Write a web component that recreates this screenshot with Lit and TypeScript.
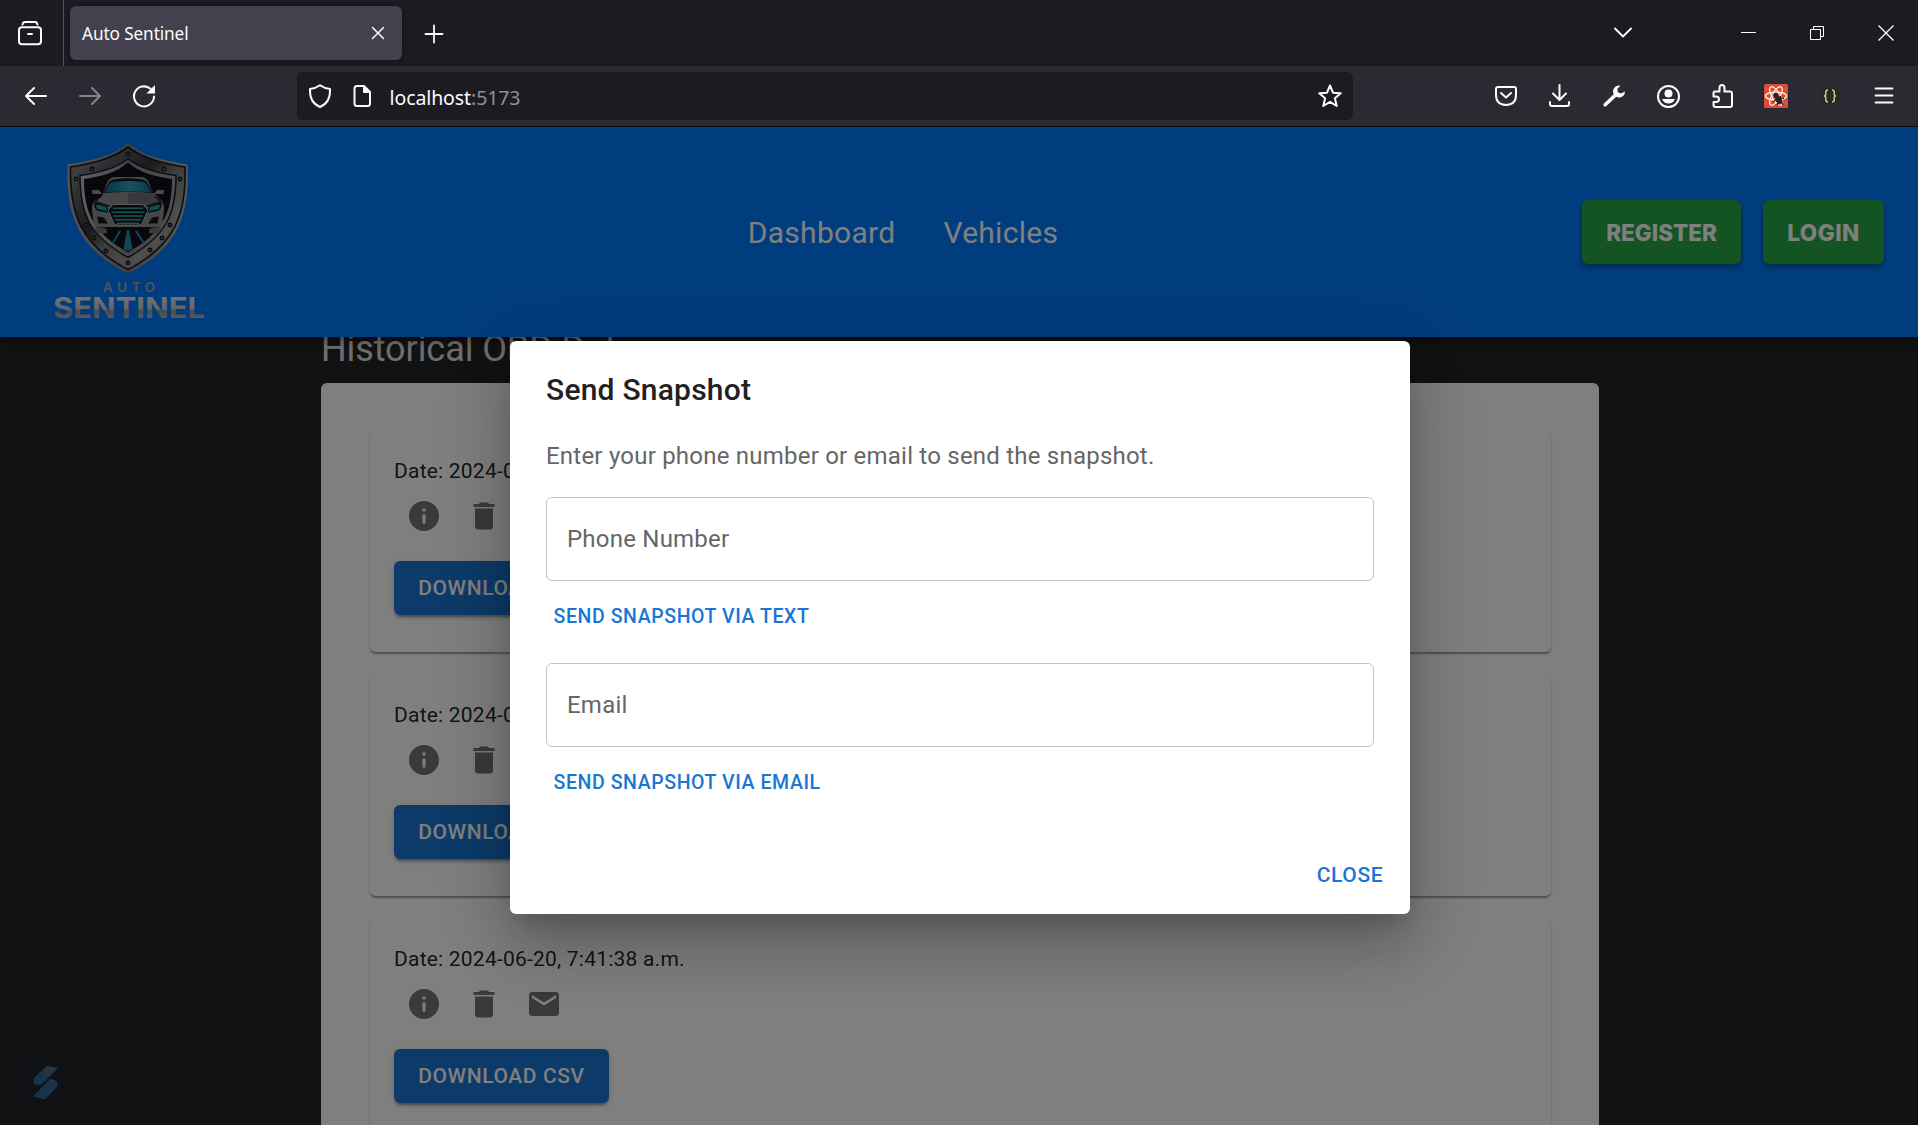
import { LitElement, html, css, svg } from "lit";
import { customElement, property } from "lit/decorators.js";

const line = (d: string, w = 2) =>
  svg`<path d=${d} fill="none" stroke="currentColor" stroke-width=${w} stroke-linecap="round" stroke-linejoin="round"></path>`;

@customElement("browser-chrome")
export class BrowserChrome extends LitElement {
  static styles = css`
    :host { display: block; font-family: "Noto Sans", "Open Sans", sans-serif; color: #fbfbfe; background: #1c1b22; }
    svg { display: block; flex: none; overflow: visible; }
    .tabs { display: flex; height: 66px; align-items: center; }
    .view { width: 64px; height: 66px; display: flex; align-items: center; padding-left: 18px; box-sizing: border-box; border-right: 1px solid #53525a; }
    .tab { display: flex; align-items: center; justify-content: space-between; box-sizing: border-box; width: 332px; height: 54px; margin-left: 6px; padding: 0 18px 0 12px; border-radius: 6px; background: #42414d; box-shadow: 0 0 4px rgba(0,0,0,.5); font-size: 17.2px; }
    .title { letter-spacing: -.1px; padding-top: 1px; }
    .plus { margin: 1px 0 0 23px; }
    .win { margin-left: auto; display: flex; align-items: center; }
    .bar { display: flex; height: 60px; align-items: center; background: #2b2a33; border-bottom: 1px solid #0c0c0d; }
    .navs { width: 297px; box-sizing: border-box; display: flex; gap: 30px; padding-left: 24px; }
    .dim { color: #85848b; }
    .url { width: 1056px; height: 48px; box-sizing: border-box; border-radius: 6px; background: #1c1b22; display: flex; align-items: center; padding: 0 11px; }
    .addr { font-size: 19.5px; margin-left: 18px; padding-top: 2px; flex: 1; letter-spacing: -.1px; }
    .port { color: #8f8f95; }
    .page { margin-left: 20.5px; }
    .tools { display: flex; gap: 30px; margin-left: auto; padding-right: 22px; align-items: center; }
  `;
  render() {
    return html`
      <div class="tabs">
        <div class="view"><svg width="24" height="24" viewBox="0 0 24 24">
          ${line("M4.5 3.6 Q5 1 7 1 H17 Q19 1 19.5 3.6")}
          <rect x="1" y="6.2" width="22" height="17" rx="3" fill="none" stroke="currentColor" stroke-width="2"></rect>
          ${line("M10 13H14")}</svg></div>
        <div class="tab"><span class="title">Auto Sentinel</span>
          <svg width="12" height="12" viewBox="0 0 12 12">${line("M.5 .5L11.5 11.5M11.5 .5L.5 11.5", 1.5)}</svg></div>
        <svg class="plus" width="18" height="18" viewBox="0 0 18 18">${line("M9 .5V17.5M.5 9H17.5", 1.8)}</svg>
        <div class="win">
          <svg width="304" height="24" viewBox="1614 21 304 24">
            ${line("M1615 28.5L1623 36.5L1631 28.5", 1.8)}
            <path d="M1741 32.5H1756" stroke="#fff" stroke-width="1"></path>
            <path d="M1810.5 29.5h10v10h-10zM1813.5 29V26.5H1823.5V36.5H1821" fill="none" stroke="#fff" stroke-width="1"></path>
            <path d="M1878.5 25.5L1893.5 40.5M1893.5 25.5L1878.5 40.5" stroke="#fff" stroke-width="1.3"></path>
          </svg>
        </div>
      </div>
      <div class="bar">
        <div class="navs">
          <svg width="24" height="24" viewBox="0 0 24 24">${line("M22 12H2.5M10 4L2 12L10 20")}</svg>
          <svg class="dim" width="24" height="24" viewBox="0 0 24 24">${line("M2 12H21.5M14 4L22 12L14 20")}</svg>
          <svg width="24" height="24" viewBox="0 0 24 24">${line("M18.5 4.8A10 10 0 1 0 22 12.5")}<path d="M23 1V9.5H14.5Z" fill="currentColor"></path></svg>
        </div>
        <div class="url">
          <svg width="24" height="24" viewBox="0 0 24 24">${line("M12 1.2C9.5 3 5.5 4.5 2 5C1.5 14 5 20 12 23C19 20 22.5 14 22 5C18.5 4.5 14.5 3 12 1.2Z")}</svg>
          <svg class="page" width="19" height="24" viewBox="0 0 19 24">${line("M4 2H11L17 8V19.5Q17 22 14.5 22H4Q1.5 22 1.5 19.5V4.5Q1.5 2 4 2Z")}<path d="M10.5 1.5V8.5H18Z" fill="currentColor" stroke="currentColor"></path></svg>
          <span class="addr">localhost<span class="port">:5173</span></span>
          <svg width="24" height="24" viewBox="0 0 24 24">${line("M12 1.5L15 8.7L22.7 9.3L16.9 14.3L18.7 22L12 17.9L5.3 22L7.1 14.3L1.3 9.3L9 8.7Z")}</svg>
        </div>
        <div class="tools">
          <svg width="24" height="24" viewBox="0 0 24 24">${line("M4 3H20Q22 3 22 5V11Q22 20.5 12 21Q2 20.5 2 11V5Q2 3 4 3Z")}${line("M7 9L12 13.5L17 9")}</svg>
          <svg width="24" height="24" viewBox="0 0 24 24">${line("M11.5 1V15.5M5 9.5L11.5 16L18 9.5M2 18V20Q2 22 4 22H19Q21 22 21 20V18")}</svg>
          <svg width="24" height="24" viewBox="0 0 24 24"><path d="M3.2 20.8L13.5 11" stroke="currentColor" stroke-width="3.6" stroke-linecap="round"></path><path d="M18.5 1.8A6 6 0 1 0 23 7.5L18.8 9.6L15.6 8L15.5 4.5Z" fill="currentColor"></path></svg>
          <svg width="24" height="24" viewBox="0 0 24 24"><circle cx="12.5" cy="12.5" r="10.5" fill="none" stroke="currentColor" stroke-width="2"></circle><circle cx="12.5" cy="9.5" r="4" fill="currentColor"></circle><path d="M6 15H19Q17 19.5 12.5 19.5Q8 19.5 6 15Z" fill="currentColor"></path></svg>
          <svg width="24" height="24" viewBox="0 0 24 24">${line("M5 7.5H9.5V4Q9.5 1 12 1Q14.5 1 14.5 4V7.5H20Q22 7.5 22 9.5V21Q22 23 20 23H5.5Q3.5 23 3.5 21V18H6Q9 18 9 15.2Q9 12.5 6 12.5H3.5V9.5Q3.5 7.5 5 7.5Z")}</svg>
          <svg width="24" height="24" viewBox="0 0 24 24"><rect width="24" height="24" rx="1.5" fill="#de4b37"></rect>
            <g fill="none" stroke="#fff" stroke-width="1.2"><ellipse cx="12" cy="12" rx="10.5" ry="4"></ellipse><ellipse cx="12" cy="12" rx="10.5" ry="4" transform="rotate(60 12 12)"></ellipse><ellipse cx="12" cy="12" rx="10.5" ry="4" transform="rotate(120 12 12)"></ellipse></g>
            <circle cx="11.8" cy="11.3" r="2.4" fill="#2b2020"></circle><path d="M12 13.5L16.5 12.5L18 18L15 20L12.5 17ZM16 14L20 14.5M17 17L19 21M12 15L9.5 18M13.5 18L13 21.5" fill="#2b2020" stroke="#2b2020" stroke-width="1.2"></path></svg>
          <svg width="24" height="24" viewBox="0 0 24 24"><circle cx="12" cy="12" r="10" fill="#282828"></circle><path d="M10 6Q7.8 6 7.8 8V10Q7.8 12 6 12Q7.8 12 7.8 14V16Q7.8 18 10 18M14 6Q16.2 6 16.2 8V10Q16.2 12 18 12Q16.2 12 16.2 14V16Q16.2 18 14 18" fill="none" stroke="#d3c873" stroke-width="1.5"></path></svg>
          <svg width="24" height="24" viewBox="0 0 24 24">${line("M3.5 4.5H20.5M3.5 11.5H20.5M3.5 18.5H20.5", 1.8)}</svg>
        </div>
      </div>`;
  }
}

@customElement("sentinel-logo")
export class SentinelLogo extends LitElement {
  static styles = css`
    :host { display: block; }
    svg { display: block; }
    .word { font-family: "Inter", sans-serif; }
  `;
  render() {
    const rivets = [[128, 154], [92, 169], [164, 169], [76, 179], [180, 179], [86, 225], [170, 225], [94, 238], [162, 238], [106, 251], [150, 250], [128, 263]];
    return html`<svg width="180" height="210" viewBox="40 127 180 210">
      <defs>
        <linearGradient id="steel" x1="0" y1="0" x2="1" y2="1"><stop offset="0" stop-color="#a4a4a6"></stop><stop offset=".22" stop-color="#5d5f64"></stop><stop offset=".42" stop-color="#34353a"></stop><stop offset=".55" stop-color="#77797d"></stop><stop offset=".75" stop-color="#a0a0a0"></stop><stop offset="1" stop-color="#3a3a40"></stop></linearGradient>
        <linearGradient id="rim" x1="0" y1="0" x2="1" y2="0"><stop offset="0" stop-color="#a8a8aa"></stop><stop offset=".5" stop-color="#808084"></stop><stop offset="1" stop-color="#b0b0b2"></stop></linearGradient>
        <linearGradient id="inner" x1="0" y1="0" x2="1" y2="0"><stop offset="0" stop-color="#c0c0c2"></stop><stop offset=".5" stop-color="#8a8b90"></stop><stop offset="1" stop-color="#9c9ca0"></stop></linearGradient>
        <linearGradient id="glass" x1="0" y1="0" x2="1" y2="0"><stop offset="0" stop-color="#106a84"></stop><stop offset=".55" stop-color="#2aa8b8"></stop><stop offset="1" stop-color="#10728a"></stop></linearGradient>
        <linearGradient id="word" x1="0" y1="298" x2="0" y2="318" gradientUnits="userSpaceOnUse"><stop offset="0" stop-color="#e2e2e2"></stop><stop offset=".55" stop-color="#c8c8cc"></stop><stop offset=".65" stop-color="#94949c"></stop><stop offset="1" stop-color="#b4b4ba"></stop></linearGradient>
      </defs>
      <path d="M128 143C114 155 92 161 67.5 164.5C66 215 78 249 128 273.5C178 249 190 215 187.5 164.5C164 161 142 155 128 143Z" fill="url(#rim)"></path>
      <path d="M128 147C112 159 92 163.5 70.5 167C69.5 214 81 245.5 128 269.5C175 245.5 186.5 214 185 167C164 163.5 144 159 128 147Z" fill="url(#steel)" stroke="#18191f" stroke-width="1.6"></path>
      <path d="M128 159C115 169 99 173 80 175.5C80 215 90 236 128 257.5C166 236 176 215 176 175.5C157 173 141 169 128 159Z" fill="url(#inner)" stroke="#18191f" stroke-width="1.5"></path>
      <path d="M128 162.5C116 173 101 176.5 84 179C84 214 94 233 128 252.5C162 233 172 214 172 179C155 176.5 140 173 128 162.5Z" fill="#101018"></path>
      ${rivets.map(([x, y]) => svg`<circle cx=${x} cy=${y} r="1.9" fill="#55555a" stroke="#141418" stroke-width="1.1"></circle>`)}
      <path d="M92.5 228H104Q108 229 107 233L98 233.5ZM163.5 228H152Q148 229 149 233L158 233.5Z" fill="#77787c"></path>
      <path d="M92 190H99L102 194H92.5ZM164 190H157L154 194H163.5Z" fill="#96979b"></path>
      <path d="M102 196L107 183Q109.5 177.5 114 177H142Q146.5 177.5 149 183L154 196L160 199.5Q164.5 203 164 210L162.5 222Q162 228 157 227.5L147 227H109L99 227.5Q94 228 93.5 222L92 210Q91.5 203 96 199.5Z" fill="#8d8f93"></path>
      <path d="M128 193H154L163 202L146 204H128Z" fill="#717378"></path>
      <path d="M103 193L108.5 183Q110 180 114 179.5Q128 177 142 179.5Q146 180 147.5 183L153 193Q128 191 103 193Z" fill="#15161d"></path>
      <path d="M104.5 192.5L109 184.5Q110.5 182 114 181.8Q128 180 142 181.8Q145.5 182 147 184.5L151.5 192.5Q128 190.5 104.5 192.5Z" fill="url(#glass)"></path>
      <path d="M101 196.5Q97 199 95.5 201.5L110 206M155 196.5Q159 199 160.5 201.5L146 206" fill="none" stroke="#15161d" stroke-width="1.2"></path>
      <path d="M95 203L107 206.5L108 212L97.5 210Q95 208 95 203ZM161 203L149 206.5L148 212L158.5 210Q161 208 161 203Z" fill="#1c9cb6" stroke="#101820" stroke-width="1.5"></path>
      <path d="M113 204.5H143L148 210L142.5 222.5Q141.5 225 139 225H117Q114.5 225 113.5 222.5L108 210Z" fill="#12161d" stroke="#b4b5b8" stroke-width="1"></path>
      <path d="M113 208.3H143M111.5 212.2H144.5M113 216H143M115 219.8H141M117 223.2H139" stroke="#35a6ae" stroke-width="1.4"></path>
      <path d="M97 216.5L104 217.5L108 223.5H98.5ZM159 216.5L152 217.5L148 223.5H157.5Z" fill="#14151b"></path>
      <path d="M127 230H129L132.5 249Q128 252.5 123.5 249ZM119 230.5L121 231.5L113.5 243.5L112 243ZM135 231.5L137 230.5L145 243L143 243.5Z" fill="#1e8ea4"></path>
      <text class="word" x="103" y="292" font-size="13.3" font-weight="600" fill="#a4a8b0" textLength="52">AUTO</text>
      <text class="word" x="53" y="318" font-size="28" font-weight="700" fill="url(#word)" textLength="152" lengthAdjust="spacingAndGlyphs">SENTINEL</text>
    </svg>`;
  }
}

@customElement("snapshot-card")
export class SnapshotCard extends LitElement {
  @property() date = "";
  static styles = css`
    :host { display: block; box-sizing: border-box; height: 220px; padding: 24px; border-radius: 6px; background: #fff; color: rgba(0,0,0,.87);
      box-shadow: 0 3px 1.5px -1.5px rgba(0,0,0,.2), 0 1.5px 1.5px rgba(0,0,0,.14), 0 1.5px 4px -.5px rgba(0,0,0,.12); }
    .date { font-size: 21px; line-height: 31.5px; letter-spacing: .22px; }
    .icons { display: flex; color: #757575; }
    .icon { padding: 12px; width: 36px; height: 36px; margin-top: -2px; }
    .csv { display: inline-flex; align-items: center; justify-content: center; box-sizing: border-box; width: 215px; height: 54px; margin-top: 15px; padding-top: 1px; border-radius: 6px; background: #1976d2; color: #fff; font-size: 21px; font-weight: 500; letter-spacing: .6px;
      box-shadow: 0 4.5px 1.5px -3px rgba(0,0,0,.2), 0 3px 3px rgba(0,0,0,.14), 0 1.5px 7.5px rgba(0,0,0,.12); }
  `;
  render() {
    const icons = [
      "M12 2C6.480 2 2 6.480 2 12s4.480 10 10 10 10-4.480 10-10S17.520 2 12 2zm1 15h-2v-6h2v6zm0-8h-2V7h2v2z",
      "M6 19c0 1.100.9 2 2 2h8c1.100 0 2-.9 2-2V7H6v12zM19 4h-3.500l-1-1h-5l-1 1H5v2h14V4z",
      "M20 4H4c-1.100 0-1.990.9-1.990 2L2 18c0 1.100.9 2 2 2h16c1.100 0 2-.9 2-2V6c0-1.100-.9-2-2-2zm0 4l-8 5-8-5V6l8 5 8-5v2z",
    ];
    return html`<div class="date">Date: ${this.date}</div>
      <div class="icons">${icons.map((d) => html`<svg class="icon" viewBox="0 0 24 24"><path fill="currentColor" d=${d}></path></svg>`)}</div>
      <div class="csv">DOWNLOAD CSV</div>`;
  }
}

@customElement("send-dialog")
export class SendDialog extends LitElement {
  static styles = css`
    :host { display: flex; flex-direction: column; box-sizing: border-box; width: 900px; height: 573px; padding: 25px 36px 12px; border-radius: 6px; background: #fff; color: #212121;
      box-shadow: 0 16.5px 22.5px -10.5px rgba(0,0,0,.2), 0 36px 57px 4.5px rgba(0,0,0,.14), 0 13.5px 69px 12px rgba(0,0,0,.12); }
    .title { font-size: 30px; line-height: 48px; font-weight: 500; letter-spacing: .22px; }
    .text { margin-top: 24px; font-size: 24px; line-height: 36px; letter-spacing: .22px; color: #666; }
    .field { box-sizing: border-box; height: 84px; margin-top: 23px; padding: 0 20px; display: flex; align-items: center; border: 1px solid #c4c4c4; border-radius: 6px; font-size: 24px; letter-spacing: .22px; color: #666; }
    .link { height: 46px; margin-top: 12px; padding-left: 7.5px; display: flex; align-items: center; font-size: 19.5px; font-weight: 500; letter-spacing: .59px; color: #1976d2; }
    .link + .field { margin-top: 24px; }
    .close { margin-top: auto; height: 55px; align-self: flex-end; display: flex; align-items: center; justify-content: center; width: 96px; margin-right: -24px; font-size: 21px; font-weight: 500; letter-spacing: .6px; color: #1976d2; }
  `;
  render() {
    return html`<div class="title">Send Snapshot</div>
      <div class="text">Enter your phone number or email to send the snapshot.</div>
      <div class="field">Phone Number</div>
      <div class="link">SEND SNAPSHOT VIA TEXT</div>
      <div class="field">Email</div>
      <div class="link">SEND SNAPSHOT VIA EMAIL</div>
      <div class="close">CLOSE</div>`;
  }
}

@customElement("app-root")
export class AppRoot extends LitElement {
  static styles = css`
    :host { display: flex; flex-direction: column; width: 1918px; height: 1125px; overflow: hidden; font-family: Roboto, sans-serif; }
    .site { position: relative; flex: 1; min-height: 0; overflow: hidden; background: #242424; }
    .header { position: relative; z-index: 1; height: 210px; background: #007bff; display: grid; grid-template-columns: 1fr auto 1fr; box-sizing: border-box; padding: 0 34px 0 40px; align-items: center;
      box-shadow: 0 3px 6px -1.5px rgba(0,0,0,.2), 0 6px 7.5px rgba(0,0,0,.14), 0 1.5px 15px rgba(0,0,0,.12); }
    .nav { display: flex; gap: 48px; font-size: 30px; letter-spacing: .28px; color: #fff; transform: translateX(-59px); }
    .auth { display: flex; gap: 22px; justify-content: flex-end; }
    .btn { height: 64px; box-sizing: border-box; border-radius: 6px; background: #28a745; color: #fff; display: flex; align-items: center; justify-content: center; font: 800 22.5px "Inter", sans-serif; box-shadow: 0 3px 6px rgba(0,0,0,.4); }
    .reg { width: 159px; }
    .log { width: 121px; letter-spacing: .5px; }
    .main { width: 1278px; margin: -12px 0 0 321px; }
    .h { font-size: 36px; line-height: 48px; letter-spacing: -.08px; color: rgba(255,255,255,.87); }
    .panel { display: flex; flex-direction: column; gap: 24px; margin-top: 10px; padding: 49px 48px 48px 49px; border-radius: 6px; background: #fff; }
    .backdrop { position: absolute; inset: 0; z-index: 3; background: rgba(0,0,0,.5); }
    .widget { position: absolute; z-index: 2; left: 20px; top: 927px; width: 50px; height: 56px; border-radius: 10px; background: #20232b; box-shadow: 0 0 4px #20232b; }
    .dialog { position: absolute; z-index: 4; left: 510px; top: 214px; }
  `;
  render() {
    const dates = ["2024-06-20, 7:42:10 a.m.", "2024-06-20, 7:41:52 a.m.", "2024-06-20, 7:41:38 a.m."];
    return html`<browser-chrome></browser-chrome>
      <div class="site">
        <div class="header">
          <sentinel-logo></sentinel-logo>
          <div class="nav"><span>Dashboard</span><span>Vehicles</span></div>
          <div class="auth"><div class="btn reg">REGISTER</div><div class="btn log">LOGIN</div></div>
        </div>
        <div class="main">
          <div class="h">Historical OBD Data</div>
          <div class="panel">${dates.map((d) => html`<snapshot-card .date=${d}></snapshot-card>`)}</div>
        </div>
        <svg class="widget" viewBox="20 1054 50 56"><defs><linearGradient id="s" x1="1" y1="0" x2="0" y2="1"><stop offset="0" stop-color="#5f7080"></stop><stop offset=".5" stop-color="#2b679c"></stop><stop offset="1" stop-color="#3a6490"></stop></linearGradient></defs>
          <path d="M47 1066L58 1068L41 1085Q35 1086 33.5 1082Q33 1079 35 1077ZM50 1079Q55 1079 57.5 1083Q58 1086 56 1088L45 1099.5L33 1096.5Z" fill="url(#s)"></path></svg>
        <div class="backdrop"></div>
        <send-dialog class="dialog"></send-dialog>
      </div>`;
  }
}
